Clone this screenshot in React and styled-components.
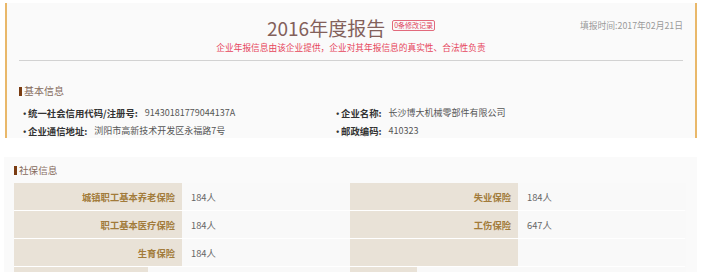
import React from "react";
import styled, { createGlobalStyle } from "styled-components";

const Global = createGlobalStyle`
  html, body { margin: 0; padding: 0; background: #ffffff; }
  body { font-family: "Noto Sans CJK SC", "Noto Sans", sans-serif; overflow: hidden; }
  #root { position: relative; width: 701px; height: 277px; }
`;

const Page = styled.div`
  position: relative;
  width: 701px;
  height: 277px;
  padding-top: 3px;
  box-sizing: border-box;
`;

const ReportPanel = styled.section`
  margin: 0 4px 0 5px;
  height: 135px;
  box-sizing: border-box;
  background: #fafafa;
  border-left: 2px solid #e9b86a;
  border-right: 2px solid #e9b86a;
  padding: 14px 12px 0 12px;
  overflow: hidden;
`;

const Header = styled.header`
  position: relative;
  text-align: center;
`;

const Title = styled.h1`
  margin: 0;
  font-weight: 400;
  font-size: 19px;
  line-height: 19px;
  color: #83605a;
  display: inline-flex;
  align-items: center;
  gap: 7px;
`;

const Badge = styled.span`
  display: inline-block;
  font-size: 7px;
  line-height: 9px;
  padding: 0 1px;
  border: 1px solid #e26a7c;
  border-radius: 2px;
  color: #e0445c;
  position: relative;
  top: -2px;
`;

const Subtitle = styled.p`
  margin: 2px 0 0 0;
  font-size: 8.7px;
  line-height: 10px;
  color: #e6465c;
`;

const FillDate = styled.span`
  position: absolute;
  right: 0;
  top: 4px;
  font-size: 8.8px;
  line-height: 10px;
  color: #9a9a9a;
`;

const Rule = styled.hr`
  margin: 7px 0 0 0;
  border: 0;
  border-top: 1px solid #d2d2d2;
`;

const SectionTitle = styled.h2`
  margin: ${(p) => p.$mt || 0}px 0 0 0;
  display: flex;
  align-items: center;
  gap: 2px;
  font-weight: 400;
  font-size: ${(p) => p.$size || 10}px;
  line-height: 12px;
  color: #856a5c;
  &::before {
    content: "";
    display: block;
    width: 3px;
    height: 9px;
    background: #7a3c12;
  }
`;

const InfoGrid = styled.div`
  margin-top: 7px;
  display: grid;
  grid-template-columns: 313px 1fr;
  grid-auto-rows: 18px;
`;

const InfoItem = styled.div`
  display: flex;
  align-items: center;
  font-size: 9px;
  line-height: 18px;
  white-space: nowrap;
`;

const InfoLabel = styled.span`
  display: inline-flex;
  align-items: center;
  font-weight: 700;
  color: #333;
  font-size: 9.4px;
  padding-right: 7px;
  &::before {
    content: "·";
    flex: 0 0 9px;
    width: 9px;
    font-weight: 700;
    text-align: left;
    padding-left: 1px;
    box-sizing: border-box;
  }
`;

const InfoValue = styled.span`
  color: #555;
`;

const SocialPanel = styled.section`
  margin: 19px 4px 0 4px;
  height: 115px;
  box-sizing: border-box;
  background: #fafafa;
  padding: 7px 12px 0 10px;
  overflow: hidden;
`;

const Table = styled.div`
  margin-top: 7px;
  display: flex;
  flex-direction: column;
  gap: 1px;
  background: #ffffff;
`;

const Row = styled.div`
  display: grid;
  grid-template-columns: ${(p) => p.$cols || "168px 168px 168px 168px"};
  height: 27px;
`;

const Cell = styled.div`
  display: flex;
  align-items: center;
  box-sizing: border-box;
  font-size: 9.3px;
  ${(p) =>
    p.$label
      ? `
    background: #e9e2d7;
    justify-content: flex-end;
    padding-right: 7px;
    color: #a27b3a;
    font-weight: 700;
  `
      : `
    background: #f9f9f9;
    justify-content: flex-start;
    padding-left: 9px;
    color: #666;
  `}
`;

const EdgeToggle = styled.span`
  position: absolute;
  right: 0;
  top: ${(p) => p.$top}px;
  width: 4px;
  height: 6px;
  overflow: hidden;
  display: block;
`;

const Chevron = ({ top }) => (
  <EdgeToggle $top={top}>
    <svg width="6" height="6" viewBox="0 0 6 6">
      <path d="M3.5 0.5 L1 3 L3.5 5.5" stroke="#999" strokeWidth="1.2" fill="none" />
    </svg>
  </EdgeToggle>
);

const basicInfo = [
  ["统一社会信用代码/注册号:", "91430181779044137A"],
  ["企业名称:", "长沙博大机械零部件有限公司"],
  ["企业通信地址:", "浏阳市高新技术开发区永福路7号"],
  ["邮政编码:", "410323"],
];

const social = [
  ["城镇职工基本养老保险", "184人", "失业保险", "184人"],
  ["职工基本医疗保险", "184人", "工伤保险", "647人"],
  ["生育保险", "184人", "", ""],
];

export default function App() {
  return (
    <Page>
      <Global />
      <ReportPanel>
        <Header>
          <Title>
            2016年度报告
            <Badge>0条修改记录</Badge>
          </Title>
          <Subtitle>企业年报信息由该企业提供，企业对其年报信息的真实性、合法性负责</Subtitle>
          <FillDate>填报时间:2017年02月21日</FillDate>
        </Header>
        <Rule />
        <SectionTitle $mt={24} $size={10}>基本信息</SectionTitle>
        <InfoGrid>
          {basicInfo.map(([k, v]) => (
            <InfoItem key={k}>
              <InfoLabel>{k}</InfoLabel>
              <InfoValue>{v}</InfoValue>
            </InfoItem>
          ))}
        </InfoGrid>
      </ReportPanel>
      <SocialPanel>
        <SectionTitle $size={9.6}>社保信息</SectionTitle>
        <Table>
          {social.map((r) => (
            <Row key={r[0]}>
              <Cell $label>{r[0]}</Cell>
              <Cell>{r[1]}</Cell>
              <Cell $label>{r[2]}</Cell>
              <Cell>{r[3]}</Cell>
            </Row>
          ))}
          <Row $cols="134px 202px 67px 269px">
            <Cell $label />
            <Cell />
            <Cell $label />
            <Cell />
          </Row>
        </Table>
      </SocialPanel>
      <Chevron top={132} />
      <Chevron top={262} />
    </Page>
  );
}
